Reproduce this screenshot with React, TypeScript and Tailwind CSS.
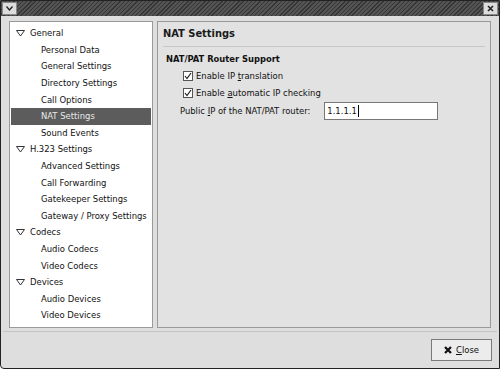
import React from "react";

type Row = { label: string; level: 0 | 1; selected?: boolean };

const rows: Row[] = [
  { label: "General", level: 0 },
  { label: "Personal Data", level: 1 },
  { label: "General Settings", level: 1 },
  { label: "Directory Settings", level: 1 },
  { label: "Call Options", level: 1 },
  { label: "NAT Settings", level: 1, selected: true },
  { label: "Sound Events", level: 1 },
  { label: "H.323 Settings", level: 0 },
  { label: "Advanced Settings", level: 1 },
  { label: "Call Forwarding", level: 1 },
  { label: "Gatekeeper Settings", level: 1 },
  { label: "Gateway / Proxy Settings", level: 1 },
  { label: "Codecs", level: 0 },
  { label: "Audio Codecs", level: 1 },
  { label: "Video Codecs", level: 1 },
  { label: "Devices", level: 0 },
  { label: "Audio Devices", level: 1 },
  { label: "Video Devices", level: 1 },
];

function Expander() {
  return (
    <svg width="9" height="7" viewBox="0 0 9 7" className="mr-[5px]">
      <path d="M0.5 0.5 L8.5 0.5 L4.5 6 Z" fill="none" stroke="#333" strokeWidth="1" />
    </svg>
  );
}

function Check() {
  return (
    <div className="flex h-[10px] w-[10px] items-center justify-center border border-[#555] bg-white">
      <svg width="8" height="8" viewBox="0 0 8 8">
        <path d="M1 4 L3 6.5 L7 1" fill="none" stroke="#222" strokeWidth="1.2" />
      </svg>
    </div>
  );
}

export default function App() {
  return (
    <div
      className="flex h-[369px] w-[500px] flex-col overflow-hidden rounded-bl-[4px] border border-[#222] bg-[#dedede] text-[#111]"
      style={{ fontFamily: '"DejaVu Sans Condensed", "DejaVu Sans", sans-serif' }}
    >
      {/* title bar */}
      <div className="flex h-[15px] items-center justify-between bg-[repeating-linear-gradient(135deg,#353535_0px,#353535_1px,#545454_1px,#545454_3px)] px-[1px]">
        <div className="flex h-[13px] w-[15px] items-center justify-center border border-[#888] bg-[#dcdcdc]">
          <svg width="7" height="5" viewBox="0 0 7 5">
            <path d="M0.5 0.5 L3.5 4 L6.5 0.5" fill="none" stroke="#222" strokeWidth="1.3" />
          </svg>
        </div>
        <div className="flex h-[13px] w-[15px] items-center justify-center border border-[#888] bg-[#dcdcdc]">
          <svg width="7" height="7" viewBox="0 0 7 7">
            <path d="M1 1 L6 6 M6 1 L1 6" fill="none" stroke="#222" strokeWidth="1.6" />
          </svg>
        </div>
      </div>

      {/* body */}
      <div className="flex flex-1 gap-[4px] px-[8px] pt-[5px]">
        <div className="flex h-[307px] w-[144px] flex-col border border-[#9a9a9a] bg-white py-[3px] pl-[1px] pr-[1px] text-[9.4px]">
          {rows.map((r) => (
            <div
              key={r.label}
              className={
                "flex h-[16.6px] items-center whitespace-nowrap " +
                (r.selected ? "bg-[#5c5c5c] text-[#e8e8e8] " : "") +
                (r.level === 0 ? "pl-[5px]" : "pl-[30px]")
              }
            >
              {r.level === 0 && <Expander />}
              {r.label}
            </div>
          ))}
        </div>

        <div className="flex h-[307px] flex-1 flex-col border border-[#9a9a9a] bg-[#e2e2e2] px-[5px]">
          <div className="flex h-[25px] items-center border-b border-[#c8c8c8] text-[11px] font-bold text-[#1a1a1a]">
            NAT Settings
          </div>
          <div className="flex flex-col pl-[3px] pt-[5px] text-[9.4px]">
            <div className="text-[9.3px] font-bold">NAT/PAT Router Support</div>
            <div className="mt-[3px] flex items-center gap-[3px] pl-[17px]">
              <Check />
              <span>
                Enable IP <span className="underline">t</span>ranslation
              </span>
            </div>
            <div className="mt-[3px] flex items-center gap-[3px] pl-[17px]">
              <Check />
              <span>
                Enable <span className="underline">a</span>utomatic IP checking
              </span>
            </div>
            <div className="mt-[2px] flex items-center pl-[14px]">
              <span>
                Public <span className="underline">I</span>P of the NAT/PAT router:
              </span>
              <div className="ml-[14px] flex h-[18px] w-[114px] items-center border border-[#777] bg-white pl-[2px]">
                1.1.1.1<span className="ml-[1px] inline-block h-[12px] w-[1px] bg-black" />
              </div>
            </div>
          </div>
        </div>
      </div>

      {/* bottom separator + button */}
      <div className="mx-[2px] border-t border-[#c4c4c4]" />
      <div className="flex h-[36px] items-center justify-end pr-[7px]">
        <button className="flex h-[22px] w-[61px] items-center justify-center gap-[4px] border border-[#7a7a7a] bg-[#ececec] text-[9.4px]">
          <svg width="8" height="8" viewBox="0 0 8 8">
            <path d="M1 1 L7 7 M7 1 L1 7" fill="none" stroke="#111" strokeWidth="2.2" />
          </svg>
          <span>
            <span className="underline">C</span>lose
          </span>
        </button>
      </div>
    </div>
  );
}
